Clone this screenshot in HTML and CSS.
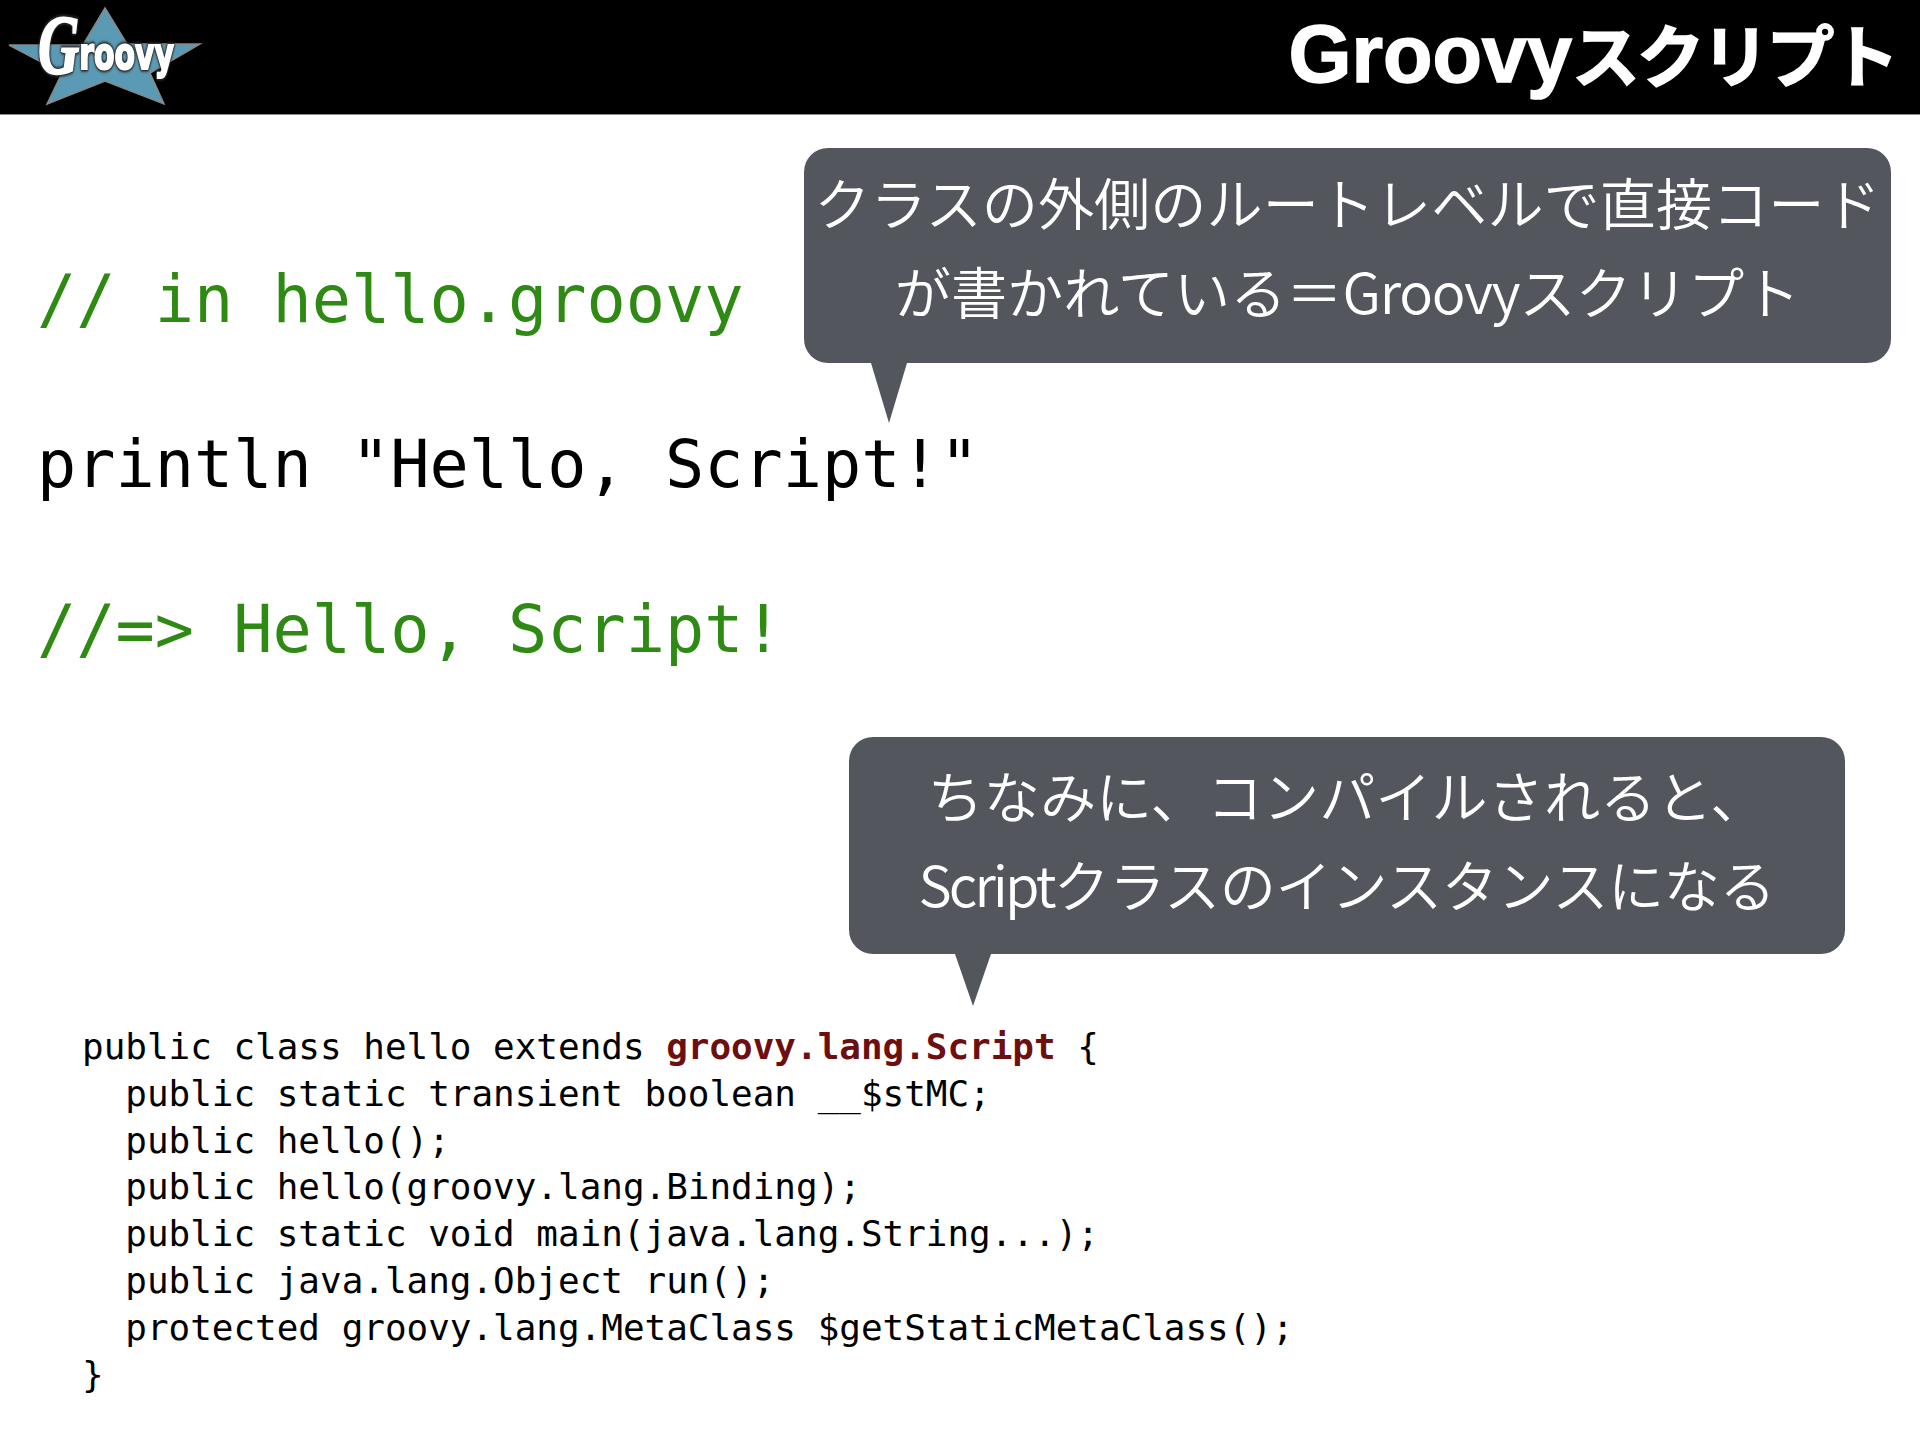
FILE: index.html
```html
<!DOCTYPE html>
<html lang="ja">
<head>
<meta charset="utf-8">
<title>Groovyスクリプト</title>
<link rel="stylesheet" href="styles.css">
</head>
<body>
<div class="slide">
  <header class="bar">
    <svg class="logo" width="204" height="114" viewBox="0 0 204 114">
      <polygon class="star" points="105,8 127,44 200,44 150,73 164,104 105,81 47,104 62,73 9,45 83,45"/>
      <text class="logo-words" transform="translate(38 74) scale(.68 1)"><tspan class="logo-g">G</tspan><tspan class="logo-rest" dy="-5">roovy</tspan></text>
    </svg>
    <h1 class="title">Groovy<span class="kana">スクリプト</span></h1>
  </header>

  <section class="big-code">
    <p class="big-line comment">// in hello.groovy</p>
    <p class="big-line">println "Hello, Script!"</p>
    <p class="big-line comment">//=&gt; Hello, Script!</p>
  </section>

  <pre class="small-code">public class hello extends <b class="super">groovy.lang.Script</b> {
  public static transient boolean __$stMC;
  public hello();
  public hello(groovy.lang.Binding);
  public static void main(java.lang.String...);
  public java.lang.Object run();
  protected groovy.lang.MetaClass $getStaticMetaClass();
}</pre>

  <aside class="bubble bubble-top">
    <p class="bubble-line">クラスの外側のルートレベルで直接コード</p>
    <p class="bubble-line">が書かれている＝<span class="latin">Groovy</span>スクリプト</p>
    <svg class="tail tail-top" width="36" height="60" viewBox="0 0 36 60"><polygon points="0,0 36,0 18,60"/></svg>
  </aside>

  <aside class="bubble bubble-bottom">
    <p class="bubble-line">ちなみに、コンパイルされると、</p>
    <p class="bubble-line bubble-line-tight"><span class="latin-tight">Script</span>クラスのインスタンスになる</p>
    <svg class="tail tail-bottom" width="36" height="52" viewBox="0 0 36 52"><polygon points="0,0 36,0 18,52"/></svg>
  </aside>
</div>
</body>
</html>
```
FILE: styles.css
```css
* { box-sizing: border-box; }
html, body { margin: 0; padding: 0; background: #fff; }
.slide { position: relative; width: 1920px; height: 1440px; overflow: hidden; background: #fff; }

.bar {
  display: flex;
  align-items: center;
  justify-content: space-between;
  height: 115px;
  background: #000;
  border-bottom: 1px solid #8a8a8a;
  padding: 0 24px 6px 0;
}
.logo { display: block; flex: none; align-self: flex-start; }
.star { fill: #5b9ab5; stroke: #888; stroke-width: 1.5; }
.logo-words {
  font-weight: 700;
  fill: #fff;
  stroke: #fff;
  stroke-width: 2;
  filter: drop-shadow(0 0 1px #222) drop-shadow(0 0 1.5px #222) drop-shadow(0 0 1px #333);
}
.logo-g { font-family: "Liberation Serif", serif; font-style: italic; font-size: 84px; }
.logo-rest { font-family: "DejaVu Sans", sans-serif; font-size: 44px; }

.title {
  margin: 0;
  color: #fff;
  font-family: "Liberation Sans", sans-serif;
  font-weight: 700;
  font-size: 81px;
  line-height: 1;
  -webkit-text-stroke: 1.5px #fff;
}
.kana {
  font-family: "Noto Sans CJK JP", sans-serif;
  font-size: 68px;
  letter-spacing: -3.2px;
}

.big-code { padding: 102px 0 0 37px; }
.big-line {
  margin: 0;
  height: 165px;
  font-family: "DejaVu Sans Mono", monospace;
  font-size: 65.2px;
  line-height: 165px;
  white-space: pre;
  color: #000;
}
.comment { color: #2f8a14; }

.small-code {
  margin: 312px 0 0 82px;
  font-family: "DejaVu Sans Mono", monospace;
  font-size: 35.95px;
  line-height: 46.8px;
  color: #000;
}
.super { color: #6e0f0f; font-weight: 700; }

.bubble {
  position: absolute;
  display: flex;
  flex-direction: column;
  align-items: center;
  background: #53575d;
  border-radius: 24px;
  color: #fff;
  font-family: "Noto Sans CJK JP", sans-serif;
  font-weight: 350;
  font-size: 56.2px;
}
.bubble-line { margin: 0; line-height: 89px; white-space: nowrap; }
.bubble-line-tight { letter-spacing: -0.4px; }
.latin { letter-spacing: -1.2px; }
.latin-tight { letter-spacing: -2.9px; }
.bubble-top { left: 804px; top: 148px; width: 1087px; height: 215px; padding-top: 8px; }
.bubble-bottom { left: 849px; top: 737px; width: 996px; height: 217px; padding-top: 12px; }
.tail { position: absolute; top: 100%; fill: #53575d; display: block; }
.tail-top { left: 67px; }
.tail-bottom { left: 106px; }
```
